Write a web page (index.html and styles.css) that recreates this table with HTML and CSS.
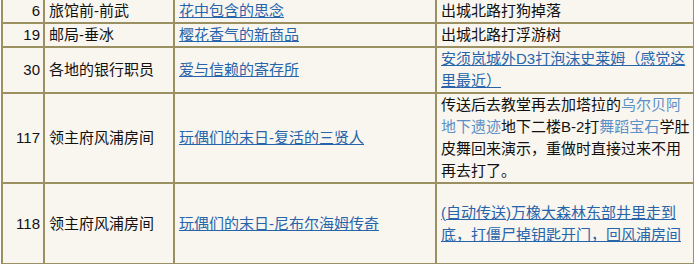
FILE: index.html
```html
<!DOCTYPE html>
<html lang="zh-CN">
<head>
<meta charset="utf-8">
<link rel="stylesheet" href="styles.css">
</head>
<body>
<table class="quests">
  <colgroup>
    <col class="c-num">
    <col class="c-loc">
    <col class="c-quest">
    <col class="c-note">
  </colgroup>
  <tr class="h1">
    <td class="num">6</td>
    <td>旅馆前-前武</td>
    <td><a href="#">花中包含的思念</a></td>
    <td>出城北路打狗掉落</td>
  </tr>
  <tr class="h1">
    <td class="num">19</td>
    <td>邮局-垂冰</td>
    <td><a href="#">樱花香气的新商品</a></td>
    <td>出城北路打浮游树</td>
  </tr>
  <tr class="h2">
    <td class="num">30</td>
    <td>各地的银行职员</td>
    <td><a href="#">爱与信赖的寄存所</a></td>
    <td><a href="#">安须岚城外D3打泡沫史莱姆（感觉这里最近）</a></td>
  </tr>
  <tr class="h4">
    <td class="num">117</td>
    <td>领主府风浦房间</td>
    <td><a href="#">玩偶们的末日-复活的三贤人</a></td>
    <td>传送后去教堂再去加塔拉的<a class="plain" href="#">乌尔贝阿地下遗迹</a>地下二楼B-2打<a class="plain" href="#">舞蹈宝石</a>学肚皮舞回来演示，重做时直接过来不用再去打了。</td>
  </tr>
  <tr class="h5">
    <td class="num">118</td>
    <td>领主府风浦房间</td>
    <td><a href="#">玩偶们的末日-尼布尔海姆传奇</a></td>
    <td><a href="#">(自动传送)万橡大森林东部井里走到底，打僵尸掉钥匙开门，回风浦房间</a></td>
  </tr>
</table>
</body>
</html>
```

FILE: styles.css
```css
html, body {
  margin: 0;
  padding: 0;
  background: #ffffff;
}

body {
  font-family: "Liberation Sans", "Noto Sans CJK SC", sans-serif;
  font-size: 15px;
  color: #111111;
}

.quests {
  border-collapse: collapse;
  table-layout: fixed;
  width: 692px;
  margin: -2px 0 0 1px;
  background: #f9f6f0;
}

.c-num { width: 42px; }
.c-loc { width: 130px; }
.c-quest { width: 262px; }
.c-note { width: 258px; }

.quests td {
  border: 2px solid #9a9062;
  padding: 0 3px 0 4px;
  line-height: 22px;
  vertical-align: middle;
  word-break: break-all;
}

.quests td.num {
  text-align: right;
  padding-right: 3px;
}

.h1 { height: 22px; }
.h2 { height: 46px; }
.h4 { height: 89px; }
.h5 { height: 81px; }

.quests a {
  color: #2764aa;
  text-decoration: underline;
}

.quests a.plain {
  color: #5c8fc6;
  text-decoration: none;
}
```
